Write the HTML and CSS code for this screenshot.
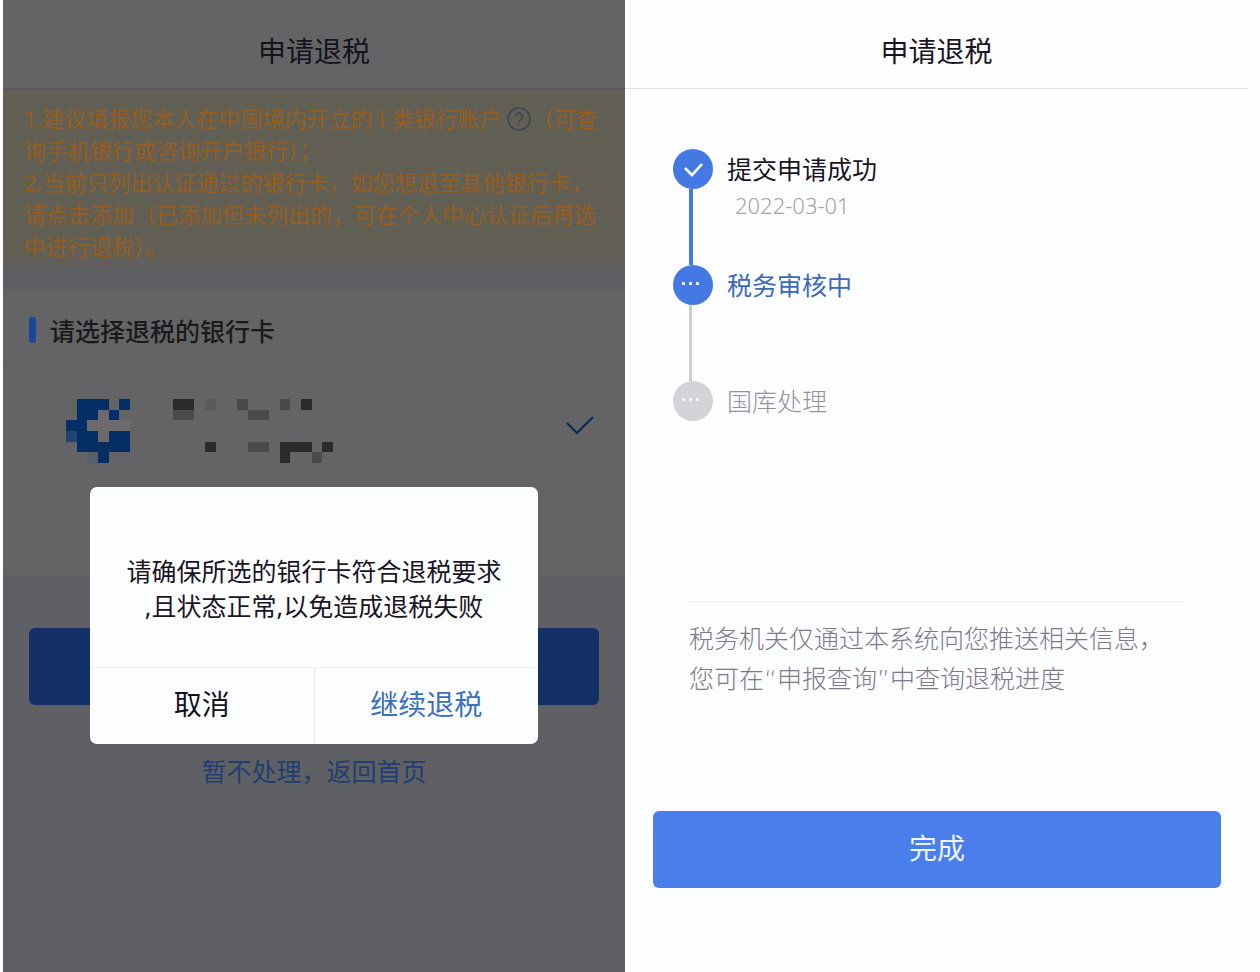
FILE: index.html
```html
<!DOCTYPE html>
<html lang="zh-CN">
<head>
    <meta charset="UTF-8">
    <meta name="viewport" content="width=device-width, initial-scale=1.0">
    <title>申请退税</title>
    <link rel="stylesheet" href="styles.css">
</head>
<body>
    <section class="screen screen-dimmed">
        <header class="header">
            <h1>申请退税</h1>
        </header>

        <div class="notice">
            <p>1.建议填报您本人在中国境内开立的 I 类银行账户<svg class="help-icon" viewBox="0 0 24 24" fill="none" stroke="currentColor" stroke-width="1.6">
                    <circle cx="12" cy="12" r="11"/>
                    <path d="M8.5 9.5a3.5 3.5 0 1 1 5.4 2.9c-1.2.8-1.9 1.4-1.9 2.8M12 17v1.6"/>
                </svg>（可查<br>询手机银行或咨询开户银行）；</p>
            <p>2.当前只列出认证通过的银行卡，如您想退至其他银行卡，请点击添加（已添加但未列出的，可在个人中心认证后再选中进行退税）。</p>
        </div>

        <div class="cards">
            <h2 class="cards-title">请选择退税的银行卡</h2>
            <div class="card-row">
                <svg class="bank-logo" viewBox="0 0 6 6" shape-rendering="crispEdges">
                    <path fill="#6e6a6c" d="M3 1h1v3H3zM2 2h4v1H2z"/>
                    <path fill="#032f66" d="M1 0h3v1H1zM5 0h1v1H5zM1 1h2v1H1zM4 1h1v1H4zM0 2h2v1H0zM1 3h2v1H1zM4 3h2v1H4zM1 4h5v1H1zM3 5h1v1H3z"/>
                    <path fill="#20436f" d="M0 3h1v1H0z"/>
                    <path fill="#56606a" d="M2 5h1v1H2z"/>
                </svg>
                <svg class="bank-info" viewBox="0 0 15 6" shape-rendering="crispEdges">
                    <path fill="#2b2b2c" d="M0 0h2v1H0zM12 0h1v1h-1zM3 4h1v1H3zM10 4h3v1h-3zM14 4h1v1h-1zM10 5h1v1h-1z"/>
                    <path fill="#4a4a4b" d="M0 1h2v1H0zM6 0h1v1H6zM7 1h2v1H7zM10 0h1v1h-1zM7 4h2v1H7zM13 5h1v1h-1z"/>
                    <path fill="#5b5b5c" d="M3 0h1v1H3z"/>
                </svg>
                <svg class="card-check" viewBox="0 0 28 20" fill="none" stroke="currentColor" stroke-width="2">
                    <path d="M1 8l10 10L27 2"/>
                </svg>
            </div>
        </div>

        <div class="actions">
            <button class="btn btn-submit" aria-label="提交"></button>
            <a class="skip-link" href="#">暂不处理，返回首页</a>
        </div>

        <div class="backdrop">
            <div class="modal" role="dialog">
                <p class="modal-text">请确保所选的银行卡符合退税要求<br>,且状态正常,以免造成退税失败</p>
                <div class="modal-buttons">
                    <button class="modal-btn">取消</button>
                    <button class="modal-btn modal-btn-primary">继续退税</button>
                </div>
            </div>
        </div>
    </section>

    <section class="screen screen-result">
        <header class="header">
            <h1>申请退税</h1>
        </header>

        <ol class="steps">
            <li class="step done">
                <svg class="step-icon" viewBox="0 0 40 40">
                    <circle cx="20" cy="20" r="20" fill="currentColor"/>
                    <path d="M12 19l7 7 10-11" fill="none" stroke="#fff" stroke-width="2.6"/>
                </svg>
                <div class="step-body">
                    <div class="step-title">提交申请成功</div>
                    <div class="step-date">2022-03-01</div>
                </div>
            </li>
            <li class="step current">
                <svg class="step-icon" viewBox="0 0 40 40">
                    <circle cx="20" cy="20" r="20" fill="currentColor"/>
                    <path d="M9 17h3v3H9zM16 17h3v3h-3zM23 17h3v3h-3z" fill="#e4ecfd"/>
                </svg>
                <div class="step-body">
                    <div class="step-title">税务审核中</div>
                </div>
            </li>
            <li class="step">
                <svg class="step-icon" viewBox="0 0 40 40">
                    <circle cx="20" cy="20" r="20" fill="currentColor"/>
                    <path d="M9 17h3v3H9zM16 17h3v3h-3zM23 17h3v3h-3z" fill="#f4f4f6"/>
                </svg>
                <div class="step-body">
                    <div class="step-title">国库处理</div>
                </div>
            </li>
        </ol>

        <p class="tips">税务机关仅通过本系统向您推送相关信息，您可在“申报查询”中查询退税进度</p>

        <button class="btn btn-finish">完成</button>
    </section>
</body>
</html>
```
FILE: styles.css
```css
* {
    box-sizing: border-box;
}

body {
    margin: 0;
    min-height: 100vh;
    display: grid;
    grid-template-columns: 625fr 635fr;
    font-family: "Noto Sans", "Noto Sans CJK SC", sans-serif;
    font-size: 25px;
    font-weight: 300;
    background: #fdfeff;
    color: #1c1424;
}

h1, h2, p, ol {
    margin: 0;
    padding: 0;
}

button {
    font-family: inherit;
    border: none;
    cursor: pointer;
}

.screen {
    position: relative;
    display: flex;
    flex-direction: column;
}

.header {
    height: 89px;
    padding-top: 14px;
    display: flex;
    align-items: center;
    justify-content: center;
    border-bottom: 1px solid #dfe1e6;
}

.header h1 {
    font-size: 28px;
    font-weight: 400;
    line-height: 40px;
}

/* left screen, dimmed behind the dialog */
.screen-dimmed {
    border-left: 3px solid #fff;
    background: #5f6064;
}

.screen-dimmed .header {
    background: #646467;
    border-bottom-color: #56575b;
    color: #14141c;
}

.notice {
    padding: 13px 24px 12px 21px;
    font-size: 22px;
    font-weight: 400;
    line-height: 32px;
    color: #965e20;
    background: linear-gradient(#625f54 88%, #606063);
}

.help-icon {
    width: 24px;
    height: 24px;
    margin-left: 6px;
    vertical-align: -4px;
    color: #3b4655;
}

.cards {
    margin-top: 16px;
    height: 285px;
    background: #646466;
}

.cards-title {
    display: flex;
    align-items: center;
    gap: 14px;
    height: 77px;
    padding: 4px 26px 0;
    font-size: 25px;
    font-weight: 500;
    color: #1a1a1c;
    border-bottom: 1px solid #5f5f62;
}

.cards-title::before {
    content: "";
    width: 7px;
    height: 26px;
    border-radius: 3px;
    background: #19489a;
}

.card-row {
    display: flex;
    align-items: center;
    height: 110px;
    padding: 18px 31px 0 63px;
}

.bank-logo {
    width: 64px;
    height: 64px;
}

.bank-info {
    width: 160px;
    height: 64px;
    margin-left: 43px;
}

.card-check {
    width: 28px;
    height: 20px;
    margin: 0 0 12px auto;
    color: #0c2858;
}

.actions {
    display: flex;
    flex-direction: column;
    align-items: center;
    padding: 53px 26px 0;
}

.btn {
    height: 77px;
    padding: 0 0 6px;
    border-radius: 6px;
    font-size: 28px;
}

.btn-submit {
    width: 100%;
    background: #133166;
}

.skip-link {
    margin-top: 48px;
    line-height: 36px;
    font-weight: 400;
    color: #213e70;
    text-decoration: none;
}

.backdrop {
    position: absolute;
    inset: 0;
    display: flex;
    justify-content: center;
    align-items: flex-start;
    padding-top: 487px;
}

.modal {
    width: 72%;
    border-radius: 7px;
    background: #fdfeff;
    overflow: hidden;
}

.modal-text {
    padding: 67px 0 43px;
    font-weight: 400;
    line-height: 35px;
    text-align: center;
    white-space: nowrap;
}

.modal-buttons {
    display: flex;
    border-top: 1px solid #f0f1f4;
}

.modal-btn {
    flex: 1;
    height: 76px;
    padding: 0 0 6px;
    background: none;
    font-size: 28px;
    font-weight: 400;
    color: #15101c;
}

.modal-btn-primary {
    border-left: 1px solid #e6e8ec;
    color: #3a70c0;
}

/* right screen, progress of the application */
.screen-result .header {
    margin-right: 12px;
}

.steps {
    list-style: none;
    margin: 60px 48px 0;
}

.step {
    position: relative;
    display: flex;
    gap: 14px;
    height: 116px;
    color: #d3d4d8;
}

.step.done,
.step.current {
    color: #4479e4;
}

/* connector to the next step */
.step:not(:last-child)::after {
    content: "";
    position: absolute;
    left: 16px;
    top: 40px;
    width: 3px;
    height: 76px;
    background: #cdced3;
}

.step.done::after {
    width: 4px;
    background: #4479e4;
}

.step-icon {
    width: 40px;
    height: 40px;
}

.step-title {
    line-height: 40px;
    color: #96919e;
}

.step.done .step-title {
    font-weight: 400;
    color: #1c1424;
}

.step.current .step-title {
    font-weight: 400;
    color: #3c68bc;
}

.step-date {
    margin-left: 8px;
    font-size: 22px;
    line-height: 32px;
    color: #a3a1aa;
}

.tips {
    margin: 104px 75px 0 64px;
    padding-top: 18px;
    font-family: "DejaVu Sans", "Noto Sans CJK SC", sans-serif;
    line-height: 40px;
    color: #7f7889;
    border-top: 1px solid #eceef2;
}

.btn-finish {
    margin: 111px 39px 0 28px;
    background: #4a7eea;
    color: #eef4ff;
    font-weight: 400;
}
```
